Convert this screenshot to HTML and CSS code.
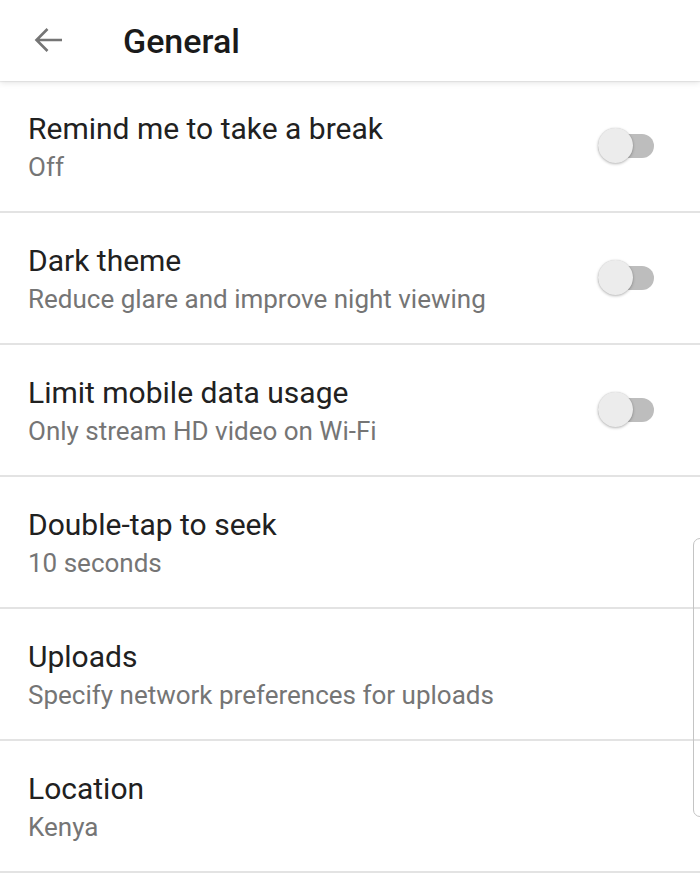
FILE: index.html
```html
<!DOCTYPE html>
<html lang="en">
<head>
<meta charset="utf-8">
<title>General</title>
<link rel="stylesheet" href="styles.css">
</head>
<body>
<div class="screen">
  <header class="appbar">
    <button class="back" aria-label="Back">
      <svg width="30" height="26" viewBox="0 0 30 26" aria-hidden="true">
        <path d="M29 13H3.5M14.5 2L3.5 13l11 11" fill="none" stroke="#757575" stroke-width="2.6"/>
      </svg>
    </button>
    <h1 class="title">General</h1>
  </header>
  <main class="list">
    <div class="row">
      <div class="text"><div class="primary">Remind me to take a break</div><div class="secondary">Off</div></div>
      <div class="switch"><span class="track"></span><span class="thumb"></span></div>
    </div>
    <div class="row">
      <div class="text"><div class="primary">Dark theme</div><div class="secondary">Reduce glare and improve night viewing</div></div>
      <div class="switch"><span class="track"></span><span class="thumb"></span></div>
    </div>
    <div class="row">
      <div class="text"><div class="primary">Limit mobile data usage</div><div class="secondary">Only stream HD video on Wi-Fi</div></div>
      <div class="switch"><span class="track"></span><span class="thumb"></span></div>
    </div>
    <div class="row">
      <div class="text"><div class="primary">Double-tap to seek</div><div class="secondary">10 seconds</div></div>
    </div>
    <div class="row">
      <div class="text"><div class="primary">Uploads</div><div class="secondary">Specify network preferences for uploads</div></div>
    </div>
    <div class="row">
      <div class="text"><div class="primary">Location</div><div class="secondary">Kenya</div></div>
    </div>
  </main>
  <div class="edge-handle"></div>
</div>
</body>
</html>
```
FILE: styles.css
```css
html, body {
  margin: 0;
  padding: 0;
  background: #ffffff;
}
body {
  font-family: Roboto, "Noto Sans", "Liberation Sans", sans-serif;
  color: #212121;
}
.screen {
  position: relative;
  width: 700px;
  height: 876px;
  overflow: hidden;
  background: #ffffff;
}
.appbar {
  position: relative;
  z-index: 1;
  height: 81px;
  display: flex;
  align-items: center;
  background: #ffffff;
  box-shadow: 0 2px 6px rgba(0, 0, 0, 0.10), 0 1px 1px rgba(0, 0, 0, 0.06);
}
.back {
  width: 30px;
  height: 26px;
  margin-left: 33px;
  margin-bottom: 1px;
  padding: 0;
  border: 0;
  background: none;
  display: flex;
}
.title {
  margin: 0 0 0 60px;
  font-size: 34px;
  font-weight: 500;
  color: #1a1a1a;
  line-height: 40px;
}
.list {
  display: flex;
  flex-direction: column;
}
.row {
  height: 130px;
  border-bottom: 2px solid #e3e3e3;
  display: flex;
  align-items: flex-start;
  padding-left: 28px;
  padding-right: 46px;
}
.text {
  flex: 1;
  padding-top: 29px;
}
.primary {
  font-size: 30px;
  line-height: 38px;
  color: #212121;
}
.secondary {
  margin-top: 3px;
  font-size: 26px;
  line-height: 32px;
  color: #757575;
}
.switch {
  position: relative;
  width: 56px;
  height: 36px;
  align-self: center;
}
.track {
  position: absolute;
  left: 0;
  right: 0;
  top: 6px;
  height: 24px;
  border-radius: 12px;
  background: #bdbdbd;
}
.thumb {
  position: absolute;
  left: 0;
  top: 0;
  width: 35px;
  height: 35px;
  border-radius: 50%;
  background: #ececec;
  box-shadow: 0 1px 3px rgba(0, 0, 0, 0.28), 0 0 1px rgba(0, 0, 0, 0.15);
}
.edge-handle {
  position: absolute;
  left: 693px;
  top: 538px;
  width: 20px;
  height: 277px;
  border: 1px solid #c4c4c4;
  border-radius: 7px;
  background: transparent;
}
```
